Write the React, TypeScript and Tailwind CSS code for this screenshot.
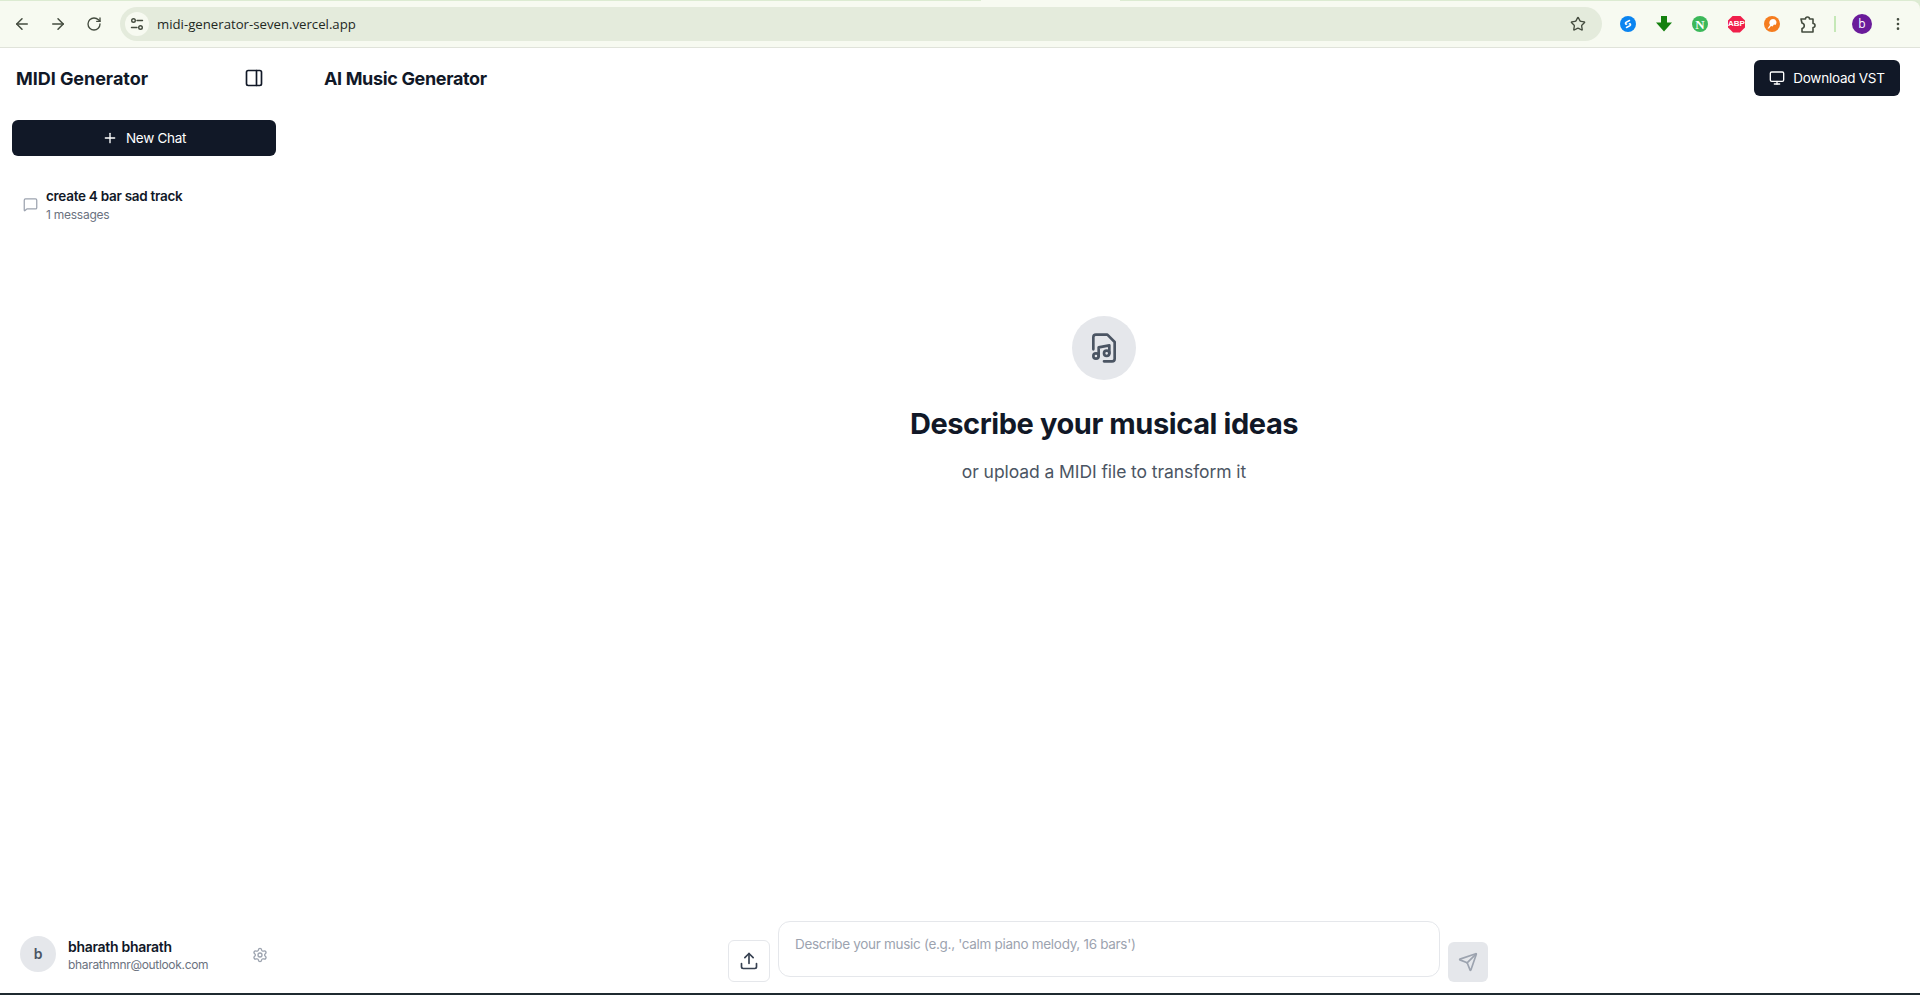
import { ArrowLeft, ArrowRight, RotateCw, Star, EllipsisVertical, PanelRight, Plus, MessageSquare, Settings, Upload, Send, Monitor } from "lucide-react";

function BrowserBar() {
  return (
    <div className="h-[48px] shrink-0 flex flex-col bg-[#dcebd2] font-['Open_Sans',sans-serif]">
      <div className="h-[1px] flex">
        <div className="w-[981px] bg-[#dcebd2]" />
        <div className="w-[139px] bg-[#f7faf1]" />
        <div className="flex-1 bg-[#dcebd2]" />
      </div>
      <div className="flex-1 flex items-center bg-[#f7faf1] border-b border-[#e0e3da] rounded-tr-lg pl-[13px] pr-[13px]">
        <ArrowLeft size={18} className="text-[#444c3f]" />
        <ArrowRight size={18} className="text-[#444c3f] ml-[18px]" />
        <RotateCw size={16} className="text-[#444c3f] ml-[19px]" />
        <div className="ml-[18px] w-[1482px] h-[34px] rounded-full bg-[#e4ebdc] flex items-center pl-[5px] pr-[16px]">
          <div className="w-[24px] h-[24px] rounded-full bg-[#f7faf1] flex items-center justify-center">
            <svg width="14" height="14" viewBox="0 0 14 14" fill="none" stroke="#444c3f" strokeWidth="1.4" strokeLinecap="round">
              <circle cx="3.500" cy="3.500" r="1.800" />
              <path d="M7 3.500h5.500M1.500 10.500H7" />
              <circle cx="10.500" cy="10.500" r="1.800" />
            </svg>
          </div>
          <span className="ml-[8px] pt-[1px] text-[13.2px] text-[#23281f]">midi-generator-seven.vercel.app</span>
          <Star size={16} className="ml-auto text-[#444c3f]" />
        </div>
        <div className="ml-[18px] w-[16px] h-[16px] rounded-full bg-[#0a84f0] flex items-center justify-center">
          <svg width="10" height="10" viewBox="0 0 10 10" fill="none" stroke="#fff" strokeWidth="1.5" strokeLinecap="round">
            <path d="M6.500 1.500 3 3.400c-1 .7-.5 2 .6 1.700M3.500 8.500 7 6.600c1-.7.500-2-.6-1.700" />
          </svg>
        </div>
        <svg className="ml-[20px]" width="16" height="16" viewBox="0 0 16 16">
          <path d="M5 0h6v6.500h5L8 15.500 0 6.500h5z" fill="#14810f" />
        </svg>
        <div className="ml-[20px] w-[16px] h-[16px] rounded-full bg-[#3cb85a] flex items-center justify-center text-white text-[13px] font-bold leading-none font-['Liberation_Serif',serif]">N</div>
        <div className="ml-[20px] w-[17px] h-[17px] bg-[#f01f4b] [clip-path:polygon(30%_0,70%_0,100%_30%,100%_70%,70%_100%,30%_100%,0_70%,0_30%)] flex items-center justify-center text-white text-[8px] font-bold leading-none font-['Liberation_Sans',sans-serif]">ABP</div>
        <div className="ml-[19px] w-[16px] h-[16px] rounded-full bg-[#f57c1f] flex items-center justify-center">
          <svg width="12" height="12" viewBox="0 0 12 12">
            <path d="M7 1a3.500 3.500 0 0 1 2.500 6L8 6.500 6.500 8.500 5 8l-2 2.500H1.500L4 7A3.800 3.800 0 0 1 7 1z" fill="#fff" />
          </svg>
        </div>
        <svg className="ml-[19px]" width="17" height="17" viewBox="0 0 17 17" fill="none" stroke="#444c3f" strokeWidth="1.600" strokeLinejoin="round">
          <path d="M2 3h4.500a2 2 0 0 1 4 0H14v4.500a2 2 0 0 1 0 4V16H3v-3.500a2.800 2.800 0 0 0 0-5.500z" />
        </svg>
        <div className="ml-[18px] w-[2px] h-[16px] bg-[#c5e8b7]" />
        <div className="ml-[16px] w-[20px] h-[20px] rounded-full bg-[#6a1b9a] flex items-center justify-center text-white text-[12px] leading-none">b</div>
        <EllipsisVertical size={16} className="ml-[18px] text-[#444c3f]" />
      </div>
    </div>
  );
}

function Sidebar() {
  return (
    <aside className="w-[288px] shrink-0 flex flex-col">
      <div className="h-[60px] flex items-center justify-between pl-[16px] pr-[24px]">
        <h1 className="text-[18px] font-bold tracking-[-0.05px] text-[#111827]">MIDI Generator</h1>
        <PanelRight size={20} className="text-[#111827]" />
      </div>
      <div className="px-[12px] mt-[12px]">
        <button className="w-full h-[36px] rounded-md bg-[#111827] text-white text-[13.5px] tracking-[-0.3px] flex items-center justify-center gap-2">
          <Plus size={16} />
          New Chat
        </button>
      </div>
      <div className="mt-[30px] pl-[23px] flex items-center gap-[8px]">
        <MessageSquare size={15} className="text-[#9ca3af] mt-[-1px]" />
        <div>
          <p className="text-[13.5px] leading-[20px] font-semibold tracking-[-0.28px] text-[#111827]">create 4 bar sad track</p>
          <p className="text-[12px] leading-[16px] tracking-[-0.25px] text-[#6b7280] mt-[1px]">1 messages</p>
        </div>
      </div>
      <div className="mt-auto mb-[20px] pl-[20px] pr-[20px] flex items-center">
        <div className="w-[36px] h-[36px] rounded-full bg-[#e5e7eb] flex items-center justify-center text-[14px] font-semibold text-[#4b5563]">b</div>
        <div className="ml-[12px] flex-1 pt-[3px]">
          <p className="text-[14px] leading-[20px] font-semibold tracking-[-0.3px] text-[#111827]">bharath bharath</p>
          <p className="text-[12px] leading-[16px] tracking-[-0.32px] text-[#6b7280]">bharathmnr@outlook.com</p>
        </div>
        <Settings size={16} className="text-[#9ca3af] mt-[2px]" />
      </div>
    </aside>
  );
}

function Main() {
  return (
    <main className="flex-1 flex flex-col">
      <header className="h-[60px] flex items-center justify-between pl-[36px] pr-[20px]">
        <h2 className="text-[18px] font-bold tracking-[-0.35px] text-[#111827]">AI Music Generator</h2>
        <button className="h-[36px] w-[146px] rounded-md bg-[#111827] text-white text-[13.5px] tracking-[-0.25px] flex items-center justify-center gap-2">
          <Monitor size={16} />
          Download VST
        </button>
      </header>
      <div className="flex-1 flex flex-col items-center pt-[208px]">
        <div className="w-[64px] h-[64px] rounded-full bg-[#e5e7eb] flex items-center justify-center">
          <svg width="32" height="32" viewBox="0 0 24 24" fill="none" stroke="#4b5563" strokeWidth="2" strokeLinecap="round" strokeLinejoin="round">
            <path d="M4 13V4a2 2 0 0 1 2-2h8.500L20 7.500V20a2 2 0 0 1-2 2h-6" />
            <circle cx="6" cy="18" r="2" />
            <circle cx="14" cy="16" r="2" />
            <path d="M8 18v-6.500l8-1.500v6" />
          </svg>
        </div>
        <h3 className="mt-[26px] text-[29px] leading-[36px] font-bold tracking-[-0.42px] text-[#111827]">Describe your musical ideas</h3>
        <p className="mt-[16px] text-[17.5px] leading-[28px] tracking-[-0.08px] text-[#4b5563]">or upload a MIDI file to transform it</p>
      </div>
      <div className="mb-[11px] flex items-end justify-center gap-[8px] pl-[8px]">
        <button className="w-[42px] h-[42px] rounded-md border border-[#e5e7eb] bg-white flex items-center justify-center">
          <Upload size={20} className="text-[#374151]" />
        </button>
        <div className="w-[662px] h-[56px] rounded-xl border border-[#e5e7eb] bg-white px-[16px] pt-[9px] mb-[5px]">
          <input className="w-full text-[13.5px] leading-[20px] tracking-[-0.3px] outline-none placeholder:text-[#9ca3af]" placeholder="Describe your music (e.g., 'calm piano melody, 16 bars')" />
        </div>
        <button className="w-[40px] h-[40px] rounded-md bg-[#e5e7eb] flex items-center justify-center">
          <Send size={20} className="text-[#9ca3af]" />
        </button>
      </div>
    </main>
  );
}

export default function App() {
  return (
    <div className="w-[1920px] h-[995px] flex flex-col bg-white font-['Inter',sans-serif] overflow-hidden">
      <BrowserBar />
      <div className="flex-1 flex min-h-0">
        <Sidebar />
        <Main />
      </div>
      <div className="h-[2px] shrink-0 bg-[#1f2a30]" />
    </div>
  );
}
